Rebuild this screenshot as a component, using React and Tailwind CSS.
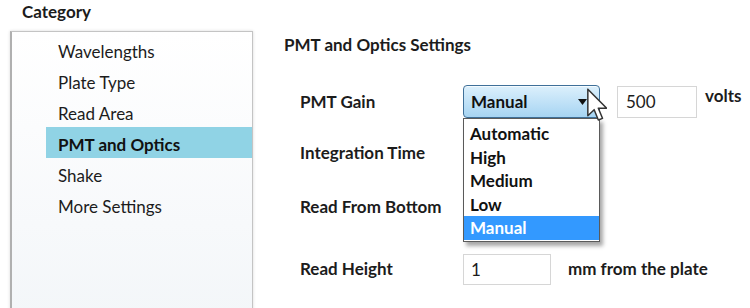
import React from "react";

const font = { fontFamily: "Lato, 'Open Sans', sans-serif" };

function Cursor() {
  return (
    <svg
      className="absolute left-[587px] top-[88px]"
      width="20"
      height="34"
      viewBox="0 0 12 20"
    >
      <path
        d="M0.5 0.5 L0.5 16.5 L4.3 12.8 L6.8 19 L9.3 18 L6.8 11.9 L11.8 11.9 Z"
        fill="#ffffff"
        stroke="#333333"
        strokeWidth="0.9"
        strokeLinejoin="round"
      />
    </svg>
  );
}

export default function App() {
  const cats = ["Wavelengths", "Plate Type", "Read Area", "PMT and Optics", "Shake", "More Settings"];
  const opts = ["Automatic", "High", "Medium", "Low", "Manual"];
  return (
    <div
      className="relative w-[750px] h-[308px] overflow-hidden bg-white text-[17px] text-[#1c1c1c]"
      style={font}
    >
      <div className="flex">
        {/* left */}
        <div className="w-[253px] shrink-0">
          <div className="pl-[22px] h-[25px] leading-[24px] font-bold">Category</div>
          <div className="ml-[10px] mt-[6px] w-[243px] h-[290px] border border-[#c4c4c4] border-l-2 border-l-[#b0b0b0] bg-gradient-to-b from-white to-[#f3f6f9] shadow-[0_0_3px_rgba(0,0,0,0.15)] pt-[2px]">
            {cats.map((c) => (
              <div
                key={c}
                className={
                  c === "PMT and Optics"
                    ? "ml-[34px] h-[31px] pt-[5px] leading-[26px] pl-[12px] bg-[#90d3e5] font-bold text-[#111]"
                    : "ml-[34px] h-[31px] pt-[5px] leading-[26px] pl-[12px]"
                }
              >
                {c}
              </div>
            ))}
          </div>
        </div>

        {/* right */}
        <div className="ml-[31px] pt-[35px] flex flex-col">
          <div className="h-[20px] leading-[20px] font-bold">PMT and Optics Settings</div>

          <div className="mt-[30px] h-[33px] flex items-center">
            <div className="w-[179px] pl-[16px] font-bold">PMT Gain</div>
            <div className="w-[137px] h-[33px] rounded-[4px] border border-[#3f7099] bg-gradient-to-b from-[#dcf0fc] to-[#a6d4f2] flex items-center pl-[7px] pr-[6px] font-bold text-[#111] shadow-[inset_0_1px_0_rgba(255,255,255,0.7)]">
              <span className="flex-1">Manual</span>
              <svg width="9" height="6" viewBox="0 0 9 6" className="mr-[6px] mt-[1px]">
                <path d="M0 0 L9 0 L4.5 6 Z" fill="#111" />
              </svg>
            </div>
            <div className="ml-[17px] w-[80px] h-[32px] border border-[#d6d6d6] flex items-center pl-[8px]">
              500
            </div>
            <div className="ml-[8px] self-start leading-[24px] font-bold -mt-[1px]">volts</div>
          </div>

          <div className="mt-[18px] h-[33px] flex items-center">
            <div className="pl-[16px] font-bold">Integration Time</div>
          </div>

          <div className="mt-[21px] h-[33px] flex items-center">
            <div className="pl-[16px] font-bold">Read From Bottom</div>
          </div>

          <div className="mt-[30px] h-[33px] flex items-center">
            <div className="w-[179px] pl-[16px] font-bold -mt-[2px]">Read Height</div>
            <div className="w-[88px] h-[31px] border border-[#d6d6d6] flex items-center pl-[7px]">1</div>
            <div className="ml-[17px] font-bold -mt-[2px]">mm from the plate</div>
          </div>
        </div>
      </div>

      {/* dropdown list overlay */}
      <div className="absolute left-[463px] top-[118px] w-[137px] h-[124px] border border-[#5a5a5a] bg-white pt-[3px] shadow-[3px_4px_4px_rgba(0,0,0,0.35)]">
        {opts.map((o, i) => (
          <div
            key={o}
            className={
              i === 4
                ? "h-[23.5px] leading-[23.5px] pl-[6px] font-bold bg-[#3399ff] text-white"
                : "h-[23.5px] leading-[23.5px] pl-[6px] font-bold text-[#111]"
            }
          >
            {o}
          </div>
        ))}
      </div>

      <Cursor />
    </div>
  );
}
